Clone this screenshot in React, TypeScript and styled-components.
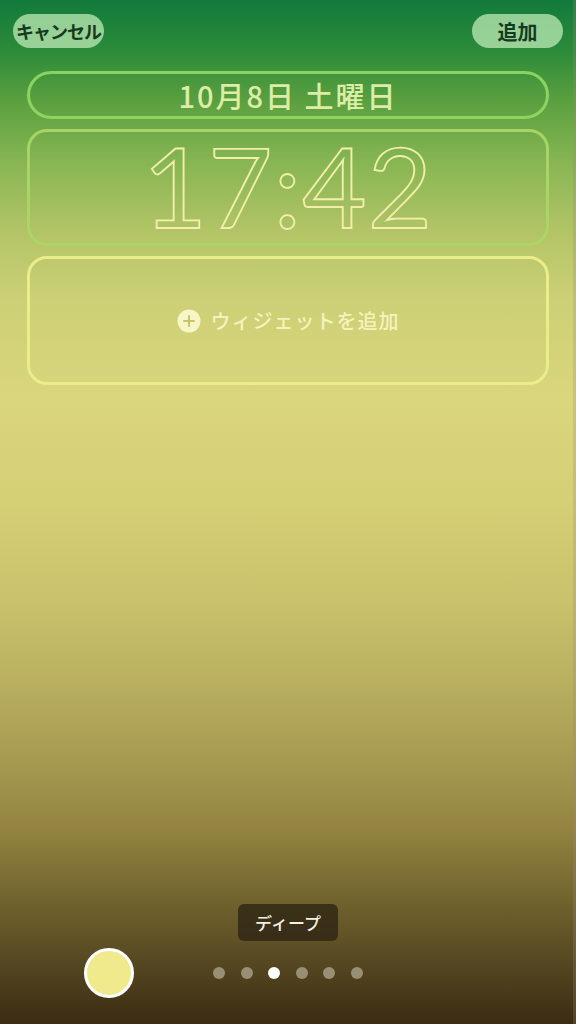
import React from "react";
import styled, { createGlobalStyle } from "styled-components";

const Global = createGlobalStyle`
  html, body { margin: 0; padding: 0; background: #000; }
  * { box-sizing: border-box; }
`;

const Screen = styled.div`
  position: relative;
  width: 576px;
  height: 1024px;
  overflow: hidden;
  display: flex;
  flex-direction: column;
  font-family: "Noto Sans CJK JP", "Noto Sans", sans-serif;
  background: linear-gradient(
    180deg,
    #127a3c 0px,
    #2b8b3a 50px,
    #5a9f3f 100px,
    #86b552 160px,
    #b2c466 230px,
    #cdd076 300px,
    #dad67d 400px,
    #d5cf76 500px,
    #cac26c 600px,
    #bab060 680px,
    #a69a51 760px,
    #928440 830px,
    #766830 890px,
    #5b4d24 950px,
    #3b2c14 1024px
  );
`;

const TopBar = styled.div`
  display: flex;
  justify-content: space-between;
  align-items: center;
  padding: 14px 13px 0 13px;
`;

const PillButton = styled.div<{ $size: number; $spacing: number }>`
  width: 91px;
  height: 34px;
  border-radius: 17px;
  background: rgba(196, 238, 186, 0.72);
  color: #173a1d;
  font-weight: 700;
  font-size: ${(p) => p.$size}px;
  letter-spacing: ${(p) => p.$spacing}px;
  display: flex;
  align-items: center;
  justify-content: center;
`;

const Stack = styled.div`
  display: flex;
  flex-direction: column;
  gap: 10px;
  margin: 23px 27px 0 27px;
`;

const DateBox = styled.div`
  height: 48px;
  border: 3px solid rgba(150, 216, 100, 0.9);
  border-radius: 24px;
  display: flex;
  align-items: center;
  justify-content: center;
  color: #dcedA6;
  font-size: 29px;
  font-weight: 500;
  letter-spacing: 2px;
`;

const ClockBox = styled.div`
  height: 117px;
  border: 3px solid rgba(170, 214, 104, 0.95);
  border-radius: 20px;
  display: flex;
  align-items: center;
  justify-content: center;
`;

const ClockText = styled.div`
  font-family: "Lato", "Noto Sans", sans-serif;
  font-weight: 400;
  font-size: 111px;
  line-height: 1;
  letter-spacing: 1px;
  color: transparent;
  -webkit-text-stroke: 1.8px #f2efac;
  margin-bottom: 5px;
`;

const WidgetBox = styled.div`
  height: 129px;
  border: 3px solid #eaee8a;
  border-radius: 20px;
  display: flex;
  align-items: center;
  justify-content: center;
  gap: 10px;
  color: rgba(250, 248, 200, 0.9);
  font-size: 20px;
  font-weight: 500;
  letter-spacing: 1px;
`;

const Spacer = styled.div`
  flex: 1;
`;

const Bottom = styled.div`
  display: flex;
  flex-direction: column;
  align-items: center;
  padding-bottom: 26px;
`;

const StyleLabel = styled.div`
  height: 37px;
  width: 100px;
  border-radius: 6px;
  background: rgba(48, 38, 20, 0.82);
  color: #f3f0e6;
  font-size: 17px;
  font-weight: 500;
  display: flex;
  align-items: center;
  justify-content: center;
`;

const Controls = styled.div`
  position: relative;
  width: 100%;
  height: 50px;
  margin-top: 7px;
  display: flex;
  align-items: center;
  justify-content: center;
`;

const Swatch = styled.div`
  position: absolute;
  left: 84px;
  top: 0;
  width: 50px;
  height: 50px;
  border-radius: 50%;
  border: 3px solid #ffffff;
  background: #f0ea8c;
`;

const Dots = styled.div`
  display: flex;
  gap: 15.6px;
`;

const Dot = styled.div<{ $active?: boolean }>`
  width: 12px;
  height: 12px;
  border-radius: 50%;
  background: ${(p) => (p.$active ? "#ffffff" : "rgba(196, 190, 170, 0.62)")};
`;

const EdgeRight = styled.div`
  position: absolute;
  right: 0;
  top: 0;
  width: 3px;
  height: 100%;
  background: rgba(150, 140, 120, 0.25);
`;

function PlusCircle() {
  return (
    <svg width="24" height="24" viewBox="0 0 24 24">
      <circle cx="12" cy="12" r="11.5" fill="rgba(250,248,205,0.92)" />
      <path d="M12 7v10M7 12h10" stroke="#c9c46c" strokeWidth="2" strokeLinecap="round" />
    </svg>
  );
}

export default function App() {
  return (
    <>
      <Global />
      <Screen>
        <TopBar>
          <PillButton $size={18} $spacing={-1}>キャンセル</PillButton>
          <PillButton $size={20} $spacing={0}>追加</PillButton>
        </TopBar>
        <Stack>
          <DateBox>10月8日 土曜日</DateBox>
          <ClockBox>
            <ClockText>17:42</ClockText>
          </ClockBox>
          <WidgetBox>
            <PlusCircle />
            <span>ウィジェットを追加</span>
          </WidgetBox>
        </Stack>
        <Spacer />
        <Bottom>
          <StyleLabel>ディープ</StyleLabel>
          <Controls>
            <Swatch />
            <Dots>
              {[0, 1, 2, 3, 4, 5].map((i) => (
                <Dot key={i} $active={i === 2} />
              ))}
            </Dots>
          </Controls>
        </Bottom>
        <EdgeRight />
      </Screen>
    </>
  );
}
